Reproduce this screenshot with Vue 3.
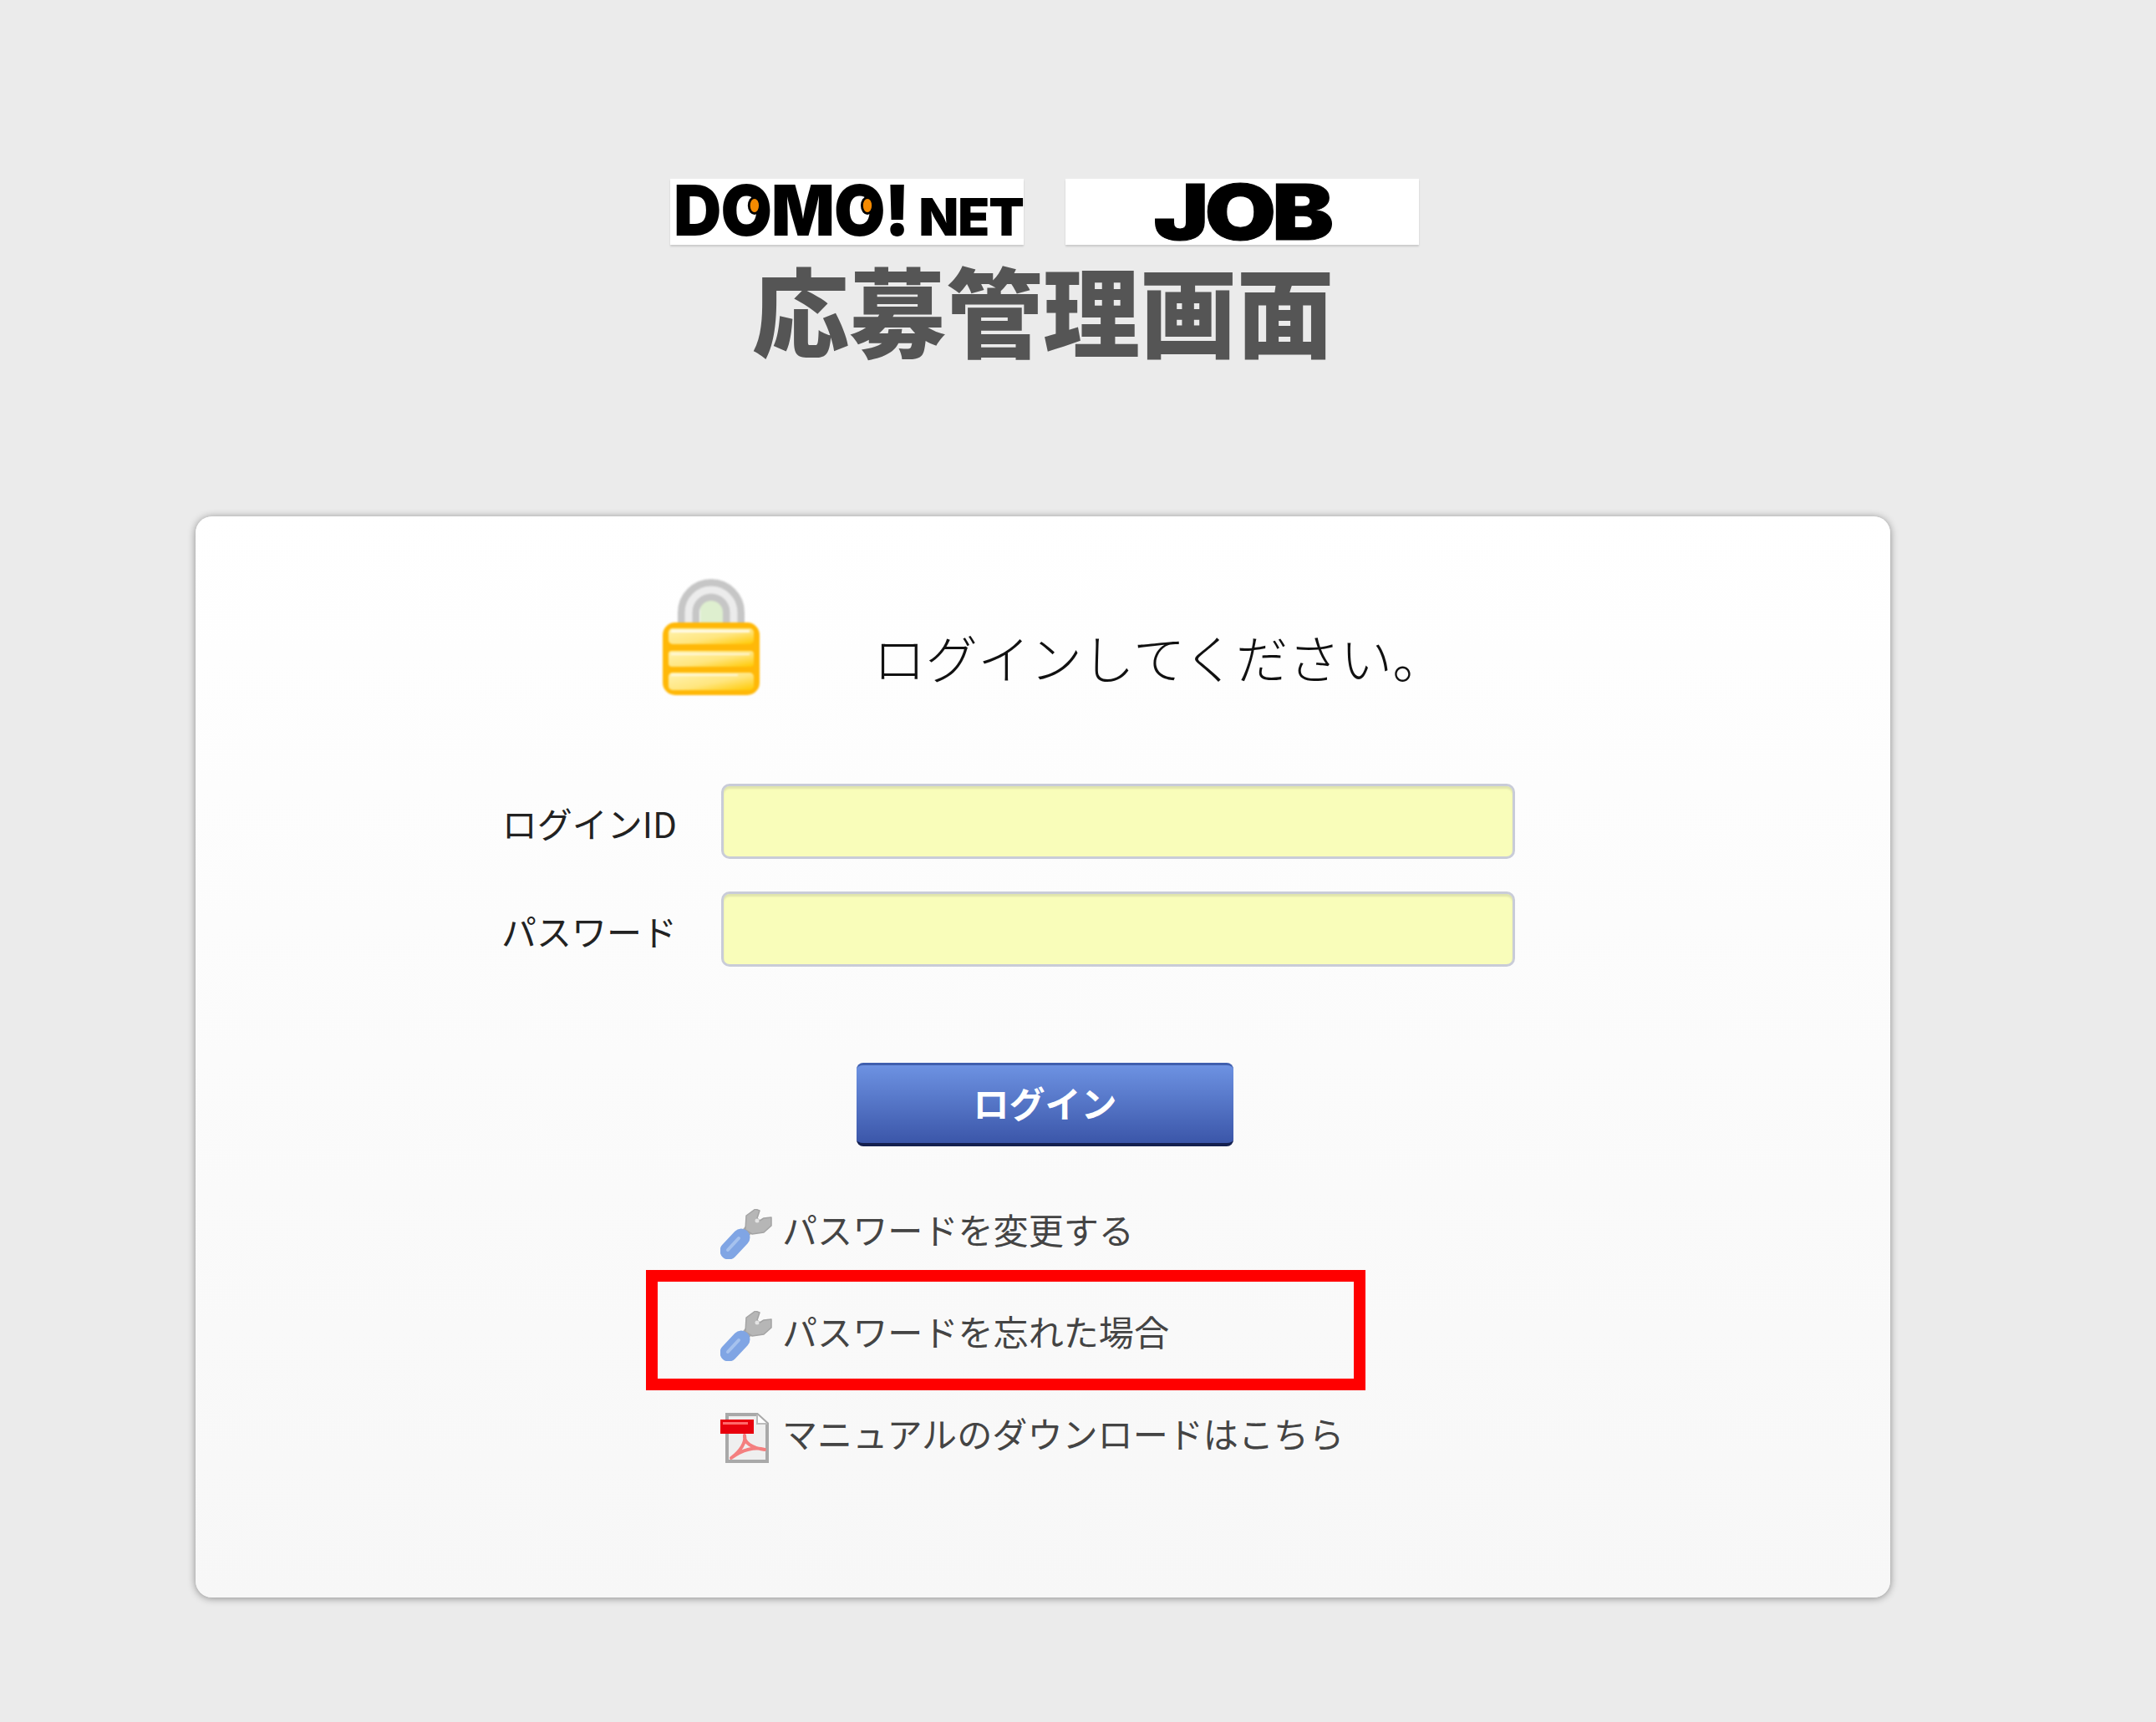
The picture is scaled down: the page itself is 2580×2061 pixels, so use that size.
<script setup>
const links = [
  { text: 'パスワードを変更する', icon: 'wrench' },
  { text: 'パスワードを忘れた場合', icon: 'wrench', marked: true },
  { text: 'マニュアルのダウンロードはこちら', icon: 'pdf' }
]
</script>

<template>
  <div class="page">
    <header class="head">
      <div class="logos">
        <div class="logo domo">
          <span class="big">D<span class="eye">O</span>M<span class="eye">O</span>!</span><span class="net">NET</span>
        </div>
        <div class="logo job"><span class="job-text">JOB</span></div>
      </div>
      <h1 class="title">応募管理画面</h1>
    </header>

    <main class="card">
      <div class="prompt">
        <svg class="lock" viewBox="0 0 116 139" aria-hidden="true">
          <defs>
            <linearGradient id="bar" x1="0" y1="0" x2="1" y2="1">
              <stop offset="0" stop-color="#fff3b0" />
              <stop offset="0.55" stop-color="#ffe680" />
              <stop offset="1" stop-color="#ffc800" />
            </linearGradient>
          </defs>
          <path d="M45 60V32a14 14 0 0 1 28 0v28z" fill="#deefcf" />
          <path d="M31 60V40a27 27 0 0 1 54 0v20" fill="none" stroke="#c6c6c6" stroke-width="26" />
          <path d="M31 60V40a27 27 0 0 1 54 0v20" fill="none" stroke="#ececec" stroke-width="9" />
          <rect y="52" width="116" height="87" rx="15" fill="#ffb808" />
          <rect x="7" y="59" width="102" height="19" rx="5" fill="url(#bar)" />
          <rect x="7" y="86" width="102" height="19" rx="4" fill="url(#bar)" />
          <rect x="7" y="112" width="102" height="21" rx="5" fill="url(#bar)" />
          <rect x="10" y="61" width="94" height="3" fill="#fff" opacity=".8" />
          <rect x="10" y="89" width="94" height="2" fill="#fff" opacity=".7" />
          <rect x="10" y="114" width="80" height="2" fill="#fff" opacity=".7" />
        </svg>
        <p class="prompt-text">ログインしてください。</p>
      </div>

      <form class="form" @submit.prevent>
        <label class="label" for="login-id">ログインID</label>
        <input id="login-id" class="field" type="text" />
        <label class="label" for="login-pass">パスワード</label>
        <input id="login-pass" class="field" type="password" />
        <button class="submit" type="submit">ログイン</button>
      </form>

      <ul class="links">
        <li v-for="link in links" :key="link.text" class="link" :class="{ marked: link.marked }">
          <svg v-if="link.icon === 'wrench'" class="icon" viewBox="0 0 62 60" aria-hidden="true">
            <path d="M26 34L36 22" stroke="#a8a8a8" stroke-width="11" fill="none" />
            <path d="M30 25L31 8L42 0L47 2L44 11L47 14L52 11L61 10L61 20L52 28L38 30z" fill="#b6b6b6" stroke="#a4a4a4" stroke-width="1.5" stroke-linejoin="round" />
            <circle cx="44" cy="14" r="2.5" fill="#e4e4e4" />
            <path d="M10 50L25 34" stroke="#80a5e4" stroke-width="21" stroke-linecap="round" fill="none" />
            <path d="M9 49L22 35" stroke="#a6c2ee" stroke-width="4" stroke-linecap="round" fill="none" />
          </svg>
          <svg v-else class="icon" viewBox="0 0 62 60" aria-hidden="true">
            <path d="M8 2H44L56 13V58H8z" fill="#efefef" stroke="#a9a9a9" stroke-width="4" />
            <path d="M44 2V13H56" fill="#fff" stroke="#bbb" stroke-width="2" />
            <path d="M13 54C24 46 31 35 29 27C28 36 38 42 53 44C42 40 26 44 13 54z" fill="none" stroke="#f47f7f" stroke-width="4" stroke-linejoin="round" />
            <rect x="0" y="8" width="40" height="17" fill="#e8000c" />
            <rect x="3" y="11" width="30" height="3" fill="#ff6a6a" />
          </svg>
          <span class="link-text">{{ link.text }}</span>
        </li>
      </ul>
    </main>
  </div>
</template>

<style scoped>
.page {
  box-sizing: border-box;
  width: 2580px;
  height: 2061px;
  padding: 214px 318px 0 234px;
  background-color: #ebebeb;
  font-family: "Noto Sans CJK JP", "Noto Sans", sans-serif;
}
.head {
  display: flex;
  flex-direction: column;
  align-items: center;
}
.logos {
  display: flex;
  gap: 50px;
  margin-left: 3px;
}
.logo {
  box-sizing: border-box;
  width: 423px;
  height: 79px;
  display: flex;
  align-items: center;
  justify-content: center;
  background: #fff;
  box-shadow: 0 2px 2px rgba(0, 0, 0, .14);
  color: #000;
  font-family: "Inter", "Liberation Sans", sans-serif;
  font-weight: 900;
  line-height: 1;
}
.domo {
  justify-content: flex-start;
  align-items: baseline;
  padding: 0 0 0 4px;
}
.big {
  flex: none;
  width: 294px;
  font-size: 84px;
  line-height: 76px;
  letter-spacing: -1px;
  white-space: nowrap;
  transform: scaleX(.945);
  transform-origin: left center;
}
.eye {
  position: relative;
  display: inline-block;
}
.eye::after {
  content: "";
  position: absolute;
  left: 37px;
  top: 24px;
  width: 11px;
  height: 16px;
  border-radius: 50%;
  background: #f58a00;
  box-shadow: 0 0 0 3px #000;
}
.net {
  flex: none;
  font-size: 62px;
  letter-spacing: -1px;
}
.job-text {
  display: inline-block;
  font-size: 92px;
  letter-spacing: -4px;
  transform: scaleX(1.2);
  -webkit-text-stroke: 1px #000;
}
.title {
  margin: 9px 0 0;
  font-size: 116px;
  line-height: 133px;
  font-weight: 900;
  color: #555;
}
.card {
  box-sizing: border-box;
  position: relative;
  height: 1294px;
  margin-top: 183px;
  padding: 75px 0 0 559px;
  border-radius: 20px;
  background: linear-gradient(#fff, #f7f7f7);
  box-shadow: 0 1px 10px rgba(0, 0, 0, .42);
}
.prompt {
  display: flex;
  align-items: flex-start;
  gap: 136px;
}
.lock {
  width: 116px;
  height: 139px;
  flex: none;
  filter: blur(.8px);
}
.prompt-text {
  margin: 53px 0 0;
  font-size: 62.5px;
  line-height: 80px;
  font-weight: 300;
  color: #111;
}
.form {
  display: grid;
  grid-template-columns: 322px 950px;
  column-gap: 53px;
  row-gap: 39px;
  margin: 106px 0 0 -305px;
  align-items: center;
}
.label {
  justify-self: end;
  font-size: 42px;
  line-height: 60px;
  color: #222;
  padding-top: 4px;
}
.field {
  box-sizing: border-box;
  width: 950px;
  height: 90px;
  border: 3px solid #c9ccd8;
  border-radius: 10px;
  background: #f9fdba;
  box-shadow: inset 0 3px 2px rgba(150, 160, 130, .25);
  outline: none;
}
.submit {
  grid-column: 1 / -1;
  justify-self: start;
  box-sizing: border-box;
  width: 451px;
  height: 100px;
  margin: 76px 0 0 537px;
  padding: 0 0 5px;
  border: 0;
  border-top: 3px solid #3f5fae;
  border-bottom: 4px solid #14204f;
  border-radius: 8px;
  background: linear-gradient(#6d92e2, #3b56a9);
  color: #fff;
  font-family: inherit;
  font-size: 43px;
  font-weight: 700;
  line-height: 1;
}
.links {
  list-style: none;
  margin: 75px 0 0 69px;
  padding: 0;
  display: flex;
  flex-direction: column;
  gap: 62px;
}
.link {
  position: relative;
  display: flex;
  align-items: center;
  gap: 12px;
  height: 60px;
  font-size: 42.1px;
  color: #444;
  white-space: nowrap;
}
.link-text {
  padding-bottom: 13px;
}
.icon {
  width: 62px;
  height: 60px;
  flex: none;
  filter: blur(.7px);
}
.marked::after {
  content: "";
  position: absolute;
  box-sizing: border-box;
  left: -89px;
  top: -49px;
  width: 861px;
  height: 144px;
  border: 14px solid #f00;
}
</style>
